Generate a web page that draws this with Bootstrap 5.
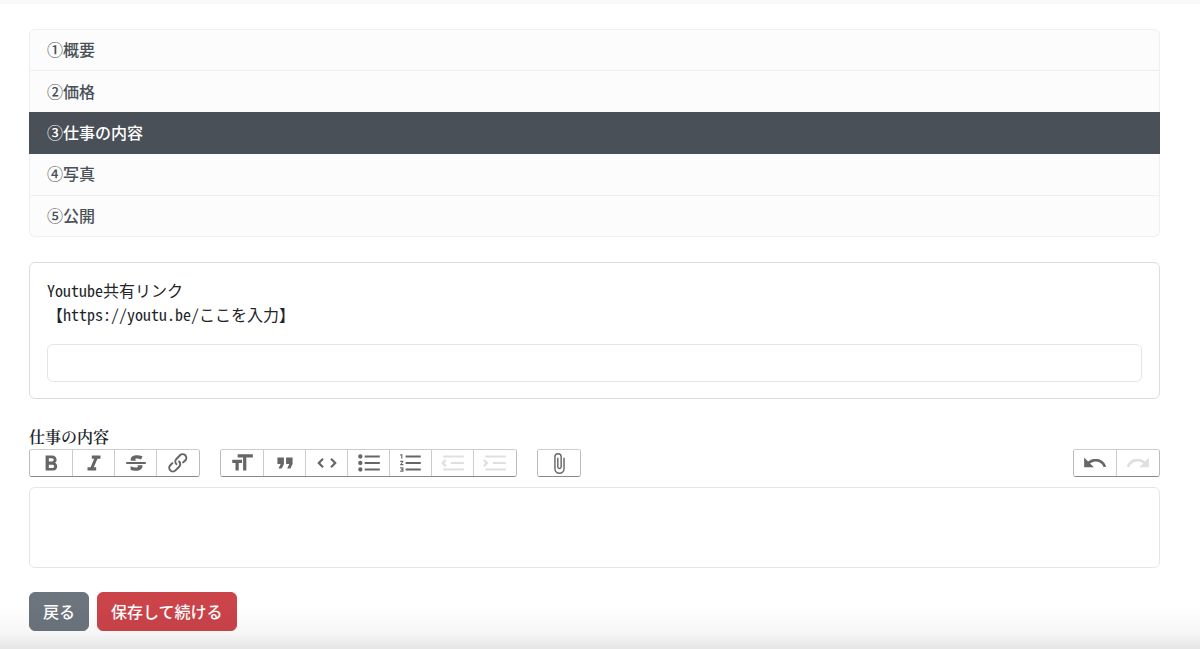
<!DOCTYPE html>
<html lang="ja">
<head>
<meta charset="utf-8">
<meta name="viewport" content="width=device-width, initial-scale=1">
<title>仕事の内容</title>
<link href="https://cdn.jsdelivr.net/npm/bootstrap@5.3.0/dist/css/bootstrap.min.css" rel="stylesheet">
<style>
  body { font-family: "Noto Sans CJK JP", sans-serif; font-feature-settings: "hwid"; color: #212529; }
  .top-strip { height: 4px; background: #f8f9fb; }
  .page-body { padding: 25px 40px 18px 29px; }

  .step-list { min-height: 208px; margin-bottom: 25px; --bs-list-group-border-color: #efeff0; --bs-list-group-border-radius: 6px;
    --bs-list-group-active-bg: #495057; --bs-list-group-active-border-color: #495057; }
  .step-list .list-group-item { padding: 0 17px 2px; background: #fcfcfc; color: #495057; font-weight: 500; }
  .step-list .list-group-item.active { background: #495057; color: #fff; }

  .link-card { margin-bottom: 26px; border-color: #dcddde; }
  .link-card .card-body { padding: 15px 17px 16px; }
  .link-card .form-label { margin-bottom: 18px; }
  .form-control { border-color: #e3e5e8; border-radius: 6px; }

  .editor-label { font-family: "Noto Serif CJK JP", "Noto Sans CJK JP", serif; font-weight: 600; }
  .tool-row { gap: 20px; margin-bottom: 10px; }
  .tool-group { display: flex; border: 1px solid #bbb; border-top-color: #ccc; border-bottom-color: #888; border-radius: 3px; }
  .tool-group button { display: flex; justify-content: center; width: 42px; padding: 0; border: 0; background: #fff; color: #666; border-radius: 2px; }
  .tool-group button + button { border-left: 1px solid #ccc; border-radius: 0 2px 2px 0; }
  .tool-group button:last-child:not(:first-child) { width: 43px; }
  .tool-group button:disabled { color: #dfdfdf; }
  .tool-group svg { width: 26px; height: 26px; fill: currentColor; }
  .tool-group .clip { padding: 2px 0 1px; }
  .tool-group .clip svg { height: 23px; }
  .editor-box { height: 81px; margin-bottom: 24px; resize: none; }

  .page-body .btn { font-weight: 500; padding: 6px 13px; line-height: 25px; }
  .btn-secondary { --bs-btn-bg: #6c757d; }
  .btn-save { --bs-btn-bg: #cb444a; --bs-btn-border-color: #cb444a; --bs-btn-color: #fff;
    --bs-btn-hover-bg: #b53a40; --bs-btn-hover-color: #fff; }
  .bottom-shade { height: 44px; pointer-events: none; background: linear-gradient(rgba(0,0,0,0), rgba(0,0,0,.03) 60%, rgba(0,0,0,.1)); }
</style>
</head>
<body>
<div class="top-strip"></div>
<main class="page-body">
  <nav class="list-group step-list" aria-label="ステップ">
    <a href="#" class="list-group-item list-group-item-action flex-fill d-flex align-items-center">①概要</a>
    <a href="#" class="list-group-item list-group-item-action flex-fill d-flex align-items-center">②価格</a>
    <a href="#" class="list-group-item list-group-item-action flex-fill d-flex align-items-center active" aria-current="page">③仕事の内容</a>
    <a href="#" class="list-group-item list-group-item-action flex-fill d-flex align-items-center">④写真</a>
    <a href="#" class="list-group-item list-group-item-action flex-fill d-flex align-items-center">⑤公開</a>
  </nav>

  <form>
    <div class="card link-card">
      <div class="card-body">
        <label for="video" class="form-label d-block">Youtube共有リンク<br>【https://youtu.be/ここを入力】</label>
        <input type="text" id="video" class="form-control">
      </div>
    </div>

    <label for="content" class="editor-label d-block">仕事の内容</label>
    <div class="d-flex flex-wrap tool-row">
      <div class="tool-group">
        <button type="button" aria-label="太字"><svg viewBox="0 0 24 24"><path d="M15.6 11.8c1-.7 1.6-1.8 1.6-2.8a4 4 0 0 0-4-4H7v14h7c2.1 0 3.7-1.7 3.7-3.8 0-1.5-.8-2.8-2.1-3.4zM10 7.5h3a1.5 1.5 0 1 1 0 3h-3v-3zm3.5 9H10v-3h3.5a1.5 1.5 0 1 1 0 3z"/></svg></button>
        <button type="button" aria-label="斜体"><svg viewBox="0 0 24 24"><path d="M10 5v3h2.2l-3.4 8H6v3h8v-3h-2.2l3.4-8H18V5h-8z"/></svg></button>
        <button type="button" aria-label="取り消し線"><svg viewBox="0 0 24 24"><path d="M12.73 14l.28.14c.26.15.45.3.57.44.12.14.18.3.18.5 0 .3-.15.56-.44.75-.3.2-.76.3-1.39.3A13.52 13.52 0 0 1 7 14.95v3.37a10.64 10.64 0 0 0 4.84.88c1.26 0 2.35-.19 3.28-.56.93-.37 1.64-.9 2.14-1.57s.74-1.45.74-2.32c0-.26-.02-.51-.06-.75h-5.21zm-5.5-4c-.08-.34-.12-.7-.12-1.1 0-1.29.52-2.3 1.58-3.02 1.05-.72 2.5-1.08 4.34-1.08 1.62 0 3.28.34 4.97 1l-1.3 2.93c-1.47-.6-2.73-.9-3.8-.9-.55 0-.96.08-1.2.26-.26.17-.38.38-.38.64 0 .27.16.52.48.74.17.12.53.3 1.05.53H7.23zM3 13h18v-2H3v2z"/></svg></button>
        <button type="button" aria-label="リンク"><svg viewBox="0 0 24 24"><path d="M9.88 13.7a4.3 4.3 0 0 1 0-6.07l3.37-3.37a4.26 4.26 0 0 1 6.07 0 4.3 4.3 0 0 1 0 6.06l-1.96 1.72a.91.91 0 1 1-1.3-1.3l1.97-1.71a2.46 2.46 0 0 0-3.48-3.48l-3.38 3.37a2.46 2.46 0 0 0 0 3.48.91.91 0 1 1-1.3 1.3z"/><path d="M4.25 19.46a4.3 4.3 0 0 1 0-6.07l1.93-1.9a.91.91 0 1 1 1.3 1.3l-1.93 1.9a2.46 2.46 0 0 0 3.48 3.48l3.37-3.38c.96-.96.96-2.52 0-3.48a.91.91 0 1 1 1.3-1.3 4.3 4.3 0 0 1 0 6.07l-3.38 3.38a4.26 4.26 0 0 1-6.07 0z"/></svg></button>
      </div>
      <div class="tool-group">
        <button type="button" aria-label="見出し"><svg viewBox="0 0 24 24"><path d="M12 9v3H9v7H6v-7H3V9h9zM8 4h14v3h-6v12h-3V7H8V4z"/></svg></button>
        <button type="button" aria-label="引用"><svg viewBox="0 0 24 24"><path d="M6 17h3l2-4V7H5v6h3l-2 4zm8 0h3l2-4V7h-6v6h3l-2 4z"/></svg></button>
        <button type="button" aria-label="コード"><svg viewBox="0 0 24 24"><path d="M18.2 12L15 15.2l1.4 1.4L21 12l-4.6-4.6L15 8.8l3.2 3.2zM5.8 12L9 8.8 7.6 7.4 3 12l4.6 4.6L9 15.2 5.8 12z"/></svg></button>
        <button type="button" aria-label="箇条書き"><svg viewBox="0 0 24 24"><path d="M4 4a2 2 0 1 0 0 4 2 2 0 0 0 0-4zm0 6a2 2 0 1 0 0 4 2 2 0 0 0 0-4zm0 6a2 2 0 1 0 0 4 2 2 0 0 0 0-4zm4 3h14v-2H8v2zm0-6h14v-2H8v2zm0-8v2h14V5H8z"/></svg></button>
        <button type="button" aria-label="番号付きリスト"><svg viewBox="0 0 24 24"><path d="M2 17h2v.5H3v1h1v.5H2v1h3v-4H2v1zm1-9h1V4H2v1h1v3zm-1 3h1.8L2 13.1v.9h3v-1H3.2L5 10.9V10H2v1zm5-6v2h14V5H7zm0 14h14v-2H7v2zm0-6h14v-2H7v2z"/></svg></button>
        <button type="button" aria-label="インデント解除" disabled><svg viewBox="0 0 24 24"><path d="M3 19h19v-2H3v2zm7-6h12v-2H10v2zm-8.3-.3l2.8 2.9L6 14.2 4 12l2-2-1.4-1.5L1 12l.7.7zM3 5v2h19V5H3z"/></svg></button>
        <button type="button" aria-label="インデント" disabled><svg viewBox="0 0 24 24"><path d="M3 19h19v-2H3v2zm7-6h12v-2H10v2zm-6.9-1L1 14.2l1.4 1.4L6 12l-.7-.7-2.8-2.8L1 9.9 3.1 12zM3 5v2h19V5H3z"/></svg></button>
      </div>
      <div class="tool-group">
        <button type="button" class="clip" aria-label="ファイル添付"><svg viewBox="0 0 24 24"><path d="M16.5 6v11.5a4 4 0 1 1-8 0V5a2.5 2.5 0 0 1 5 0v10.5a1 1 0 1 1-2 0V6H10v9.5a2.5 2.5 0 0 0 5 0V5a4 4 0 1 0-8 0v12.5a5.5 5.5 0 0 0 11 0V6h-1.5z"/></svg></button>
      </div>
      <div class="tool-group ms-auto">
        <button type="button" aria-label="元に戻す"><svg viewBox="0 0 24 24"><path d="M12.5 8c-2.6 0-5 1-6.9 2.6L2 7v9h9l-3.6-3.6A8 8 0 0 1 20 16l2.4-.8a10.5 10.5 0 0 0-10-7.2z"/></svg></button>
        <button type="button" aria-label="やり直す" disabled><svg viewBox="0 0 24 24"><path d="M18.4 10.6a10.5 10.5 0 0 0-16.9 4.6L4 16a8 8 0 0 1 12.7-3.6L13 16h9V7l-3.6 3.6z"/></svg></button>
      </div>
    </div>
    <textarea id="content" class="form-control editor-box"></textarea>

    <div class="d-flex gap-2">
      <button type="button" class="btn btn-secondary">戻る</button>
      <button type="submit" class="btn btn-save">保存して続ける</button>
    </div>
  </form>
</main>
<div class="bottom-shade fixed-bottom"></div>
<script src="https://cdn.jsdelivr.net/npm/bootstrap@5.3.0/dist/js/bootstrap.bundle.min.js"></script>
</body>
</html>
